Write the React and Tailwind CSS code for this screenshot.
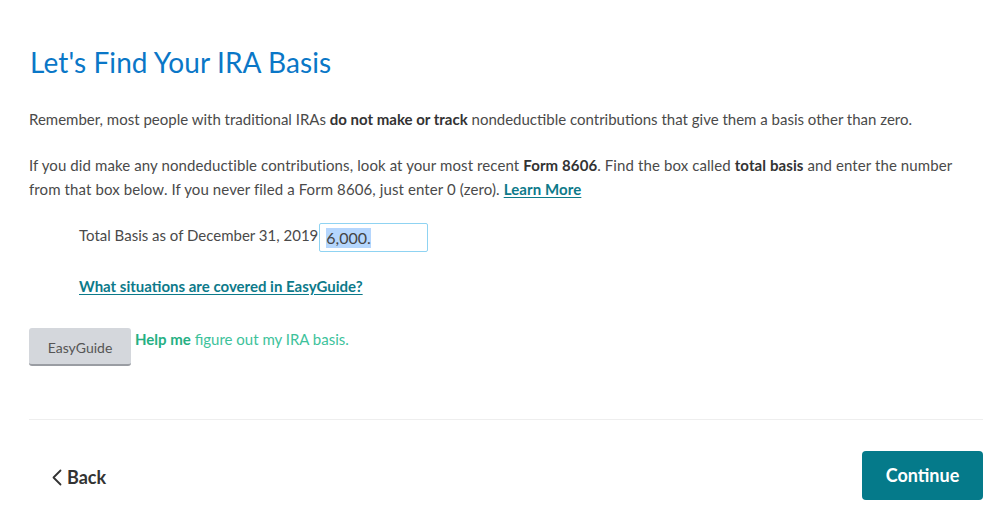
export default function App() {
  return (
    <div className="min-h-[517px] bg-white font-['Lato','Noto_Sans',sans-serif] text-[#4a4a4a]">
      <div className="pl-[29px] pr-[16px] pt-[44px]">
        {/* Heading */}
        <h1 className="text-[28px] leading-[36px] font-normal text-[#0a77c7] pl-[1px] tracking-[0.1px]">
          Let's Find Your IRA Basis
        </h1>

        {/* Intro copy */}
        <p className="mt-[27px] text-[15px] leading-6">
          Remember, most people with traditional IRAs{' '}
          <strong className="font-bold text-[#333]">do not make or track</strong>{' '}
          nondeductible contributions that give them a basis other than zero.
        </p>
        <p className="mt-[22px] text-[15px] leading-6 pr-[30px] tracking-[0.1px]">
          If you did make any nondeductible contributions, look at your most recent{' '}
          <strong className="font-bold text-[#333]">Form 8606</strong>. Find the box called{' '}
          <strong className="font-bold text-[#333]">total basis</strong> and enter the number
          from that box below. If you never filed a Form 8606, just enter 0 (zero).{' '}
          <a href="#" className="font-bold text-[#0d7a8a] underline underline-offset-2">
            Learn More
          </a>
        </p>

        {/* Total basis field */}
        <div className="mt-[22px] pl-[50px] flex items-start gap-[1px]">
          <label className="text-[15px] leading-6">Total Basis as of December 31, 2019</label>
          <div className="w-[109px] h-[29px] border border-[#8fd3f2] rounded-[2px] flex items-center pl-[6px]">
            <span className="text-[16px] text-[#444] bg-[#b5d6fd] leading-[20px]">6,000.</span>
          </div>
        </div>

        <div className="mt-[22px] pl-[50px]">
          <a href="#" className="text-[15px] leading-6 font-bold text-[#0d7a8a] underline underline-offset-2">
            What situations are covered in EasyGuide?
          </a>
        </div>

        {/* EasyGuide row */}
        <div className="mt-[30px] flex items-start gap-[4px]">
          <button className="w-[102px] h-[38px] rounded-[3px] bg-[#d4d7dc] border-b-2 border-[#9a9da3] text-[14px] text-[#555] pt-[2px]">
            EasyGuide
          </button>
          <p className="text-[15px] leading-6 text-[#3dc29b] -mt-[1px]">
            <span className="font-bold text-[#25b083]">Help me</span> figure out my IRA basis.
          </p>
        </div>

        {/* Divider */}
        <div className="mt-[53px] border-t border-[#eeeeee]" />

        {/* Footer nav */}
        <div className="mt-[31px] flex items-center justify-between">
          <button className="flex items-center gap-[5px] pl-[23px] pt-[4px] text-[18px] font-bold text-[#333]">
            <svg width="10" height="17" viewBox="0 0 10 17" fill="none" stroke="#333" strokeWidth="1.8" strokeLinecap="round" strokeLinejoin="round">
              <polyline points="8.5,1.5 1.5,8.5 8.5,15.5" />
            </svg>
            Back
          </button>
          <button className="w-[121px] h-[49px] rounded-[4px] bg-[#057a8a] text-white text-[18px] font-bold">
            Continue
          </button>
        </div>
      </div>
    </div>
  );
}
